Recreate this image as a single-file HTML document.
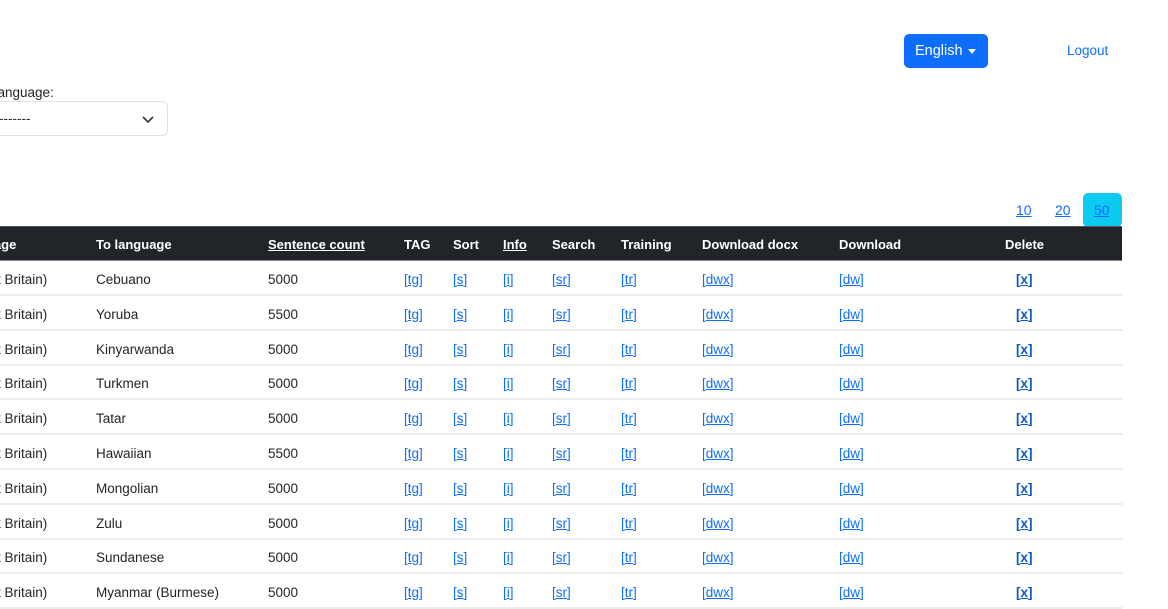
<!DOCTYPE html>
<html><head><meta charset="utf-8"><style>
*{margin:0;padding:0;box-sizing:border-box}
body{width:1168px;height:592px;overflow:hidden;background:#fff;font-family:"Liberation Sans",sans-serif;font-size:13.5px;color:#212529;position:relative}
.abs{position:absolute}
a{color:#0d6efd;text-decoration:none}
.btn{left:904px;top:34px;width:84px;height:34px;background:#0d6efd;border-radius:5px;color:#fff;font-size:14.5px;line-height:34px;padding-left:11px}
.btn:after{content:"";position:absolute;left:64px;top:15px;border:4px solid transparent;border-top:5px solid #fff;border-bottom:0}
.sel{left:-10px;top:101px;width:178px;height:35px;border:1px solid #dee2e6;border-radius:6px}
.pg{top:202px;font-size:14px;text-decoration:underline;color:#0d6efd}
.head{left:0;top:226px;width:1122px;height:35px;background:#212529;border-top:1px solid #555;border-bottom:1px solid #888;color:#fff;font-weight:bold;font-size:13px}
.row{left:0;width:1122px;height:35px;border-bottom:2px solid #ececec}
.row span,.head span{position:absolute;top:11px;white-space:nowrap}
.head span{top:10px}
.u{text-decoration:underline}
.l{color:#0d6efd}
.l i{font-style:normal;text-decoration:underline}
.x{font-weight:bold;color:#0a58ca}
</style></head><body>
<div class="abs btn">English</div>
<a class="abs" style="left:1067px;top:43px;font-size:13.5px">Logout</a>
<div class="abs" style="left:-10px;top:85px;font-size:13.5px">Language:</div>
<div class="abs sel"><span class="abs" style="left:8px;top:9px;color:#333">-------</span>
<svg class="abs" style="left:151px;top:11px" width="12" height="12" viewBox="0 0 12 12"><path d="M1 4l5 5 5-5" fill="none" stroke="#333" stroke-width="1.6"/></svg></div>
<span class="abs pg" style="left:1016px">10</span>
<span class="abs pg" style="left:1055px">20</span>
<div class="abs" style="left:1083px;top:193px;width:39px;height:34px;background:#0dcaf0;border-radius:5px"></div>
<span class="abs pg" style="left:1094px">50</span>
<div class="abs head">
<span style="left:-14px">uage</span><span style="left:96px">To language</span><span style="left:268px" class="u">Sentence count</span><span style="left:404px">TAG</span><span style="left:453px">Sort</span><span style="left:503px" class="u">Info</span><span style="left:552px">Search</span><span style="left:621px">Training</span><span style="left:702px">Download docx</span><span style="left:839px">Download</span><span style="left:1005px">Delete</span>
</div>
<div id="rows"></div>
<script>
var langs=[["Cebuano",5000],["Yoruba",5500],["Kinyarwanda",5000],["Turkmen",5000],["Tatar",5000],["Hawaiian",5500],["Mongolian",5000],["Zulu",5000],["Sundanese",5000],["Myanmar (Burmese)",5000]];
var h="";
langs.forEach(function(l,i){
var t=261+i*34.8;
h+='<div class="abs row" style="top:'+t+'px"><span style="left:-3px">t Britain)</span><span style="left:96px">'+l[0]+'</span><span style="left:268px">'+l[1]+'</span>'+
'<span class="l" style="left:404px">[<i>tg</i>]</span><span class="l" style="left:453px">[<i>s</i>]</span><span class="l" style="left:503px">[<i>i</i>]</span><span class="l" style="left:552px">[<i>sr</i>]</span><span class="l" style="left:621px">[<i>tr</i>]</span><span class="l" style="left:702px">[<i>dwx</i>]</span><span class="l" style="left:839px">[<i>dw</i>]</span><span class="l x" style="left:1016px">[<i>x</i>]</span></div>';
});
document.getElementById("rows").innerHTML=h;
</script>
</body></html>
